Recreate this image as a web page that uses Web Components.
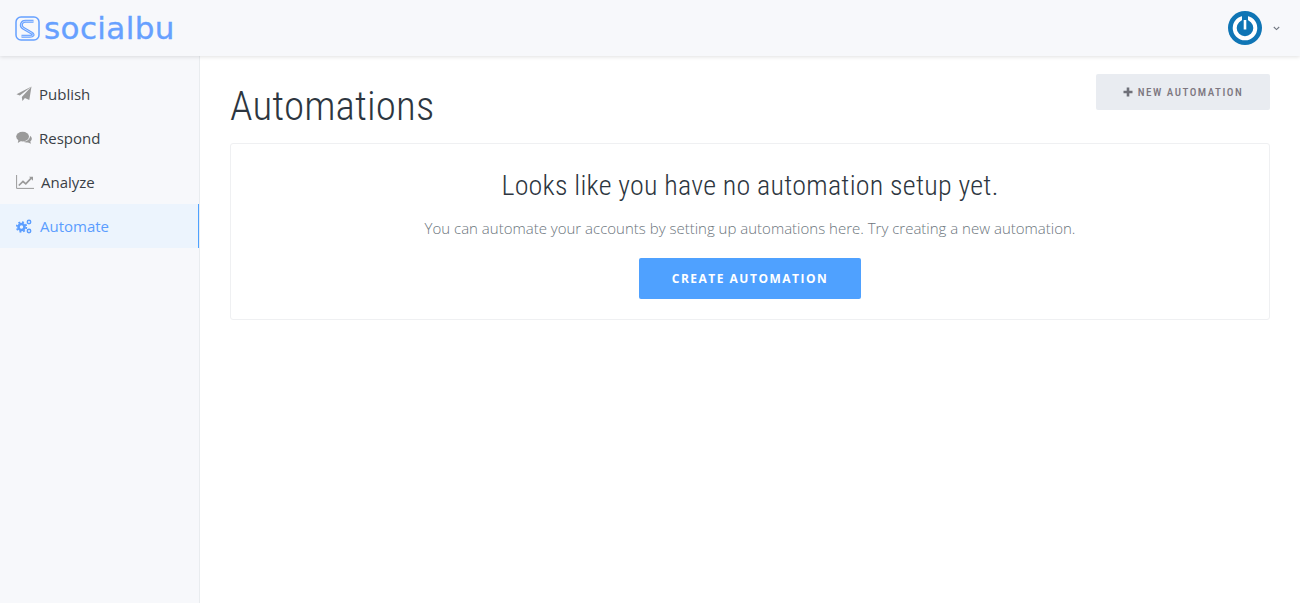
<!DOCTYPE html>
<html><head><meta charset="utf-8"><style>
html,body{margin:0;padding:0;height:100%;background:#fff}
body{font-family:"Open Sans",sans-serif}
</style></head><body>
<sb-app></sb-app>
<template id="t-app"><style>
:host{display:grid;grid-template-columns:200px 1fr;grid-template-rows:56px 547px;height:603px;overflow:hidden}
sb-top{grid-column:1/3;z-index:2}
</style><sb-top></sb-top><sb-side></sb-side><sb-main></sb-main></template>

<template id="t-top"><style>
:host{display:flex;align-items:center;justify-content:space-between;background:#f7f8fb;box-shadow:0 1px 4px rgba(0,0,0,.12);padding:0 20px 0 15px;height:56px;box-sizing:border-box}
.logo{display:flex;align-items:center;gap:4px;color:#66a0ff}
.word{font:400 31px/32px "DejaVu Sans",sans-serif;letter-spacing:.4px;-webkit-text-stroke:.35px #66a0ff;position:relative;top:-.5px}
.me{display:flex;align-items:center;gap:11px}
</style><div class="logo"><svg width="25" height="25" viewBox="0 0 25 25" fill="none"><rect x="1" y="1" width="23" height="23" rx="5" stroke="#66a0ff" stroke-width="1.500"/><path d="M18.500 5.300H10.500C6.500 5.300 4.800 9.600 8 12L16.500 17C19.300 18.800 18 20.300 15 20.300H6.500" stroke="#66a0ff" stroke-width="3"/><path d="M18.500 5.300H10.500C6.500 5.300 4.800 9.600 8 12L16.500 17C19.300 18.800 18 20.300 15 20.300H6.500" stroke="#dbe7ff" stroke-width=".8"/></svg><span class="word">socialbu</span></div>
<div class="me"><svg width="34" height="34" viewBox="0 0 34 34"><circle cx="17" cy="17" r="17" fill="#0f75b5"/><circle cx="17" cy="17" r="10.300" fill="none" stroke="#fff" stroke-width="4"/><path d="M17 4v14" stroke="#0f75b5" stroke-width="6"/><path d="M17 9v9.500" stroke="#fff" stroke-width="2.600"/></svg><svg width="7" height="5" viewBox="0 0 7 5"><path d="M.8 1l2.700 2.600L6.200 1" fill="none" stroke="#707680" stroke-width="1.100"/></svg></div></template>

<template id="t-side"><style>
:host{display:block;background:#f7f8fb;border-right:1px solid #e9ecef;padding-top:16px;box-sizing:border-box}
</style><slot></slot></template>

<template id="t-item"><style>
:host{display:flex;align-items:center;height:44px;padding-left:16px;box-sizing:border-box;font:400 15px/20px "Open Sans",sans-serif;color:#3a3f46}
:host([active]){background:#ecf4fd;color:#5b9dff;border-right:1px solid #4ea1ff}
.i{display:flex;margin-right:var(--g,7px)}
</style><span class="i"><slot name="icon"></slot></span><slot></slot></template>

<template id="t-main"><style>
:host{display:block;padding:18px 30px 0;position:relative}
.head{display:flex;justify-content:space-between;align-items:flex-start;height:69px}
h1{margin:7px 0 0;font:300 41px/50px "Roboto",sans-serif;font-stretch:75%;letter-spacing:.12px;color:#2d3640}
.new{display:flex;align-items:center;justify-content:center;gap:5px;width:174px;height:36px;background:#e9ecf1;border-radius:2px;font:500 11px/16px "Roboto",sans-serif;font-stretch:75%;letter-spacing:1.500px;color:#7d7780}
.new span{position:relative;top:1px}
.card{border:1px solid #eff0f2;border-radius:3px;height:177px;box-sizing:border-box;display:flex;flex-direction:column;align-items:center;padding-top:24px}
h2{margin:0;font:300 28px/36px "Roboto",sans-serif;font-stretch:75%;letter-spacing:.24px;color:#2d3640}
p{margin:13px 0 0;font:300 15px/22px "Open Sans",sans-serif;color:#6c757d}
.go{margin-top:19px;width:222px;height:41px;display:flex;align-items:center;justify-content:center;background:#4fa1ff;border-radius:2px;color:#fff;font:700 12px/16px "Open Sans",sans-serif;letter-spacing:1.500px}
</style><div class="head"><h1>Automations</h1><div class="new"><svg width="10" height="10" viewBox="0 0 10 10"><path d="M5 .5v9M.5 5h9" stroke="#6f7079" stroke-width="2.600"/></svg><span>NEW AUTOMATION</span></div></div>
<div class="card"><h2>Looks like you have no automation setup yet.</h2><p>You can automate your accounts by setting up automations here. Try creating a new automation.</p><div class="go">CREATE AUTOMATION</div></div></template>

<script>
function def(n,t){customElements.define(n,class extends HTMLElement{constructor(){super();this.attachShadow({mode:'open'}).appendChild(document.getElementById(t).content.cloneNode(true));}})}
def('sb-top','t-top');def('sb-item','t-item');def('sb-main','t-main');
customElements.define('sb-side',class extends HTMLElement{constructor(){super();this.attachShadow({mode:'open'}).appendChild(document.getElementById('t-side').content.cloneNode(true));
const c='#9a9a9a';
this.innerHTML=`
<sb-item><svg slot="icon" width="16" height="16" viewBox="0 0 16 16"><path d="M15.500.5 13.300 14l-4.400-1.900L6.400 15l-.6-4L15.500.5 3.800 9.600.5 8.200z" fill="${c}"/></svg>Publish</sb-item>
<sb-item><svg slot="icon" width="16" height="14" viewBox="0 0 16 14"><ellipse cx="6.600" cy="5.600" rx="6.400" ry="4.900" fill="${c}"/><path d="M2.500 8.500 1.800 12l4-2.500zM14 4.800c1.500 1 2.200 2.600 1.600 4-.3.8-.8 1.300-1.300 1.800l.7 2.200-3-1.400c-1.700.4-3.500 0-4.700-.8 3.500.1 6.800-2.400 6.700-5.800z" fill="${c}"/></svg>Respond</sb-item>
<sb-item><svg slot="icon" width="18" height="14" viewBox="0 0 18 14"><path d="M.6 0v13.400H18" fill="none" stroke="${c}" stroke-width="1"/><path d="M2.800 10.500 7 6.500l2.800 2.300 5.400-5.600" fill="none" stroke="${c}" stroke-width="1.700"/><path d="M13 1.800h4v4z" fill="${c}"/></svg>Analyze</sb-item>
<sb-item active style="--g:8px"><svg slot="icon" width="16" height="15" viewBox="0 0 16 15"><g fill="none" stroke="#5b9dff"><circle cx="5.500" cy="8" r="3" stroke-width="2.600"/><circle cx="5.500" cy="8" r="4.800" stroke-width="1.800" stroke-dasharray="1.900 1.870"/><circle cx="13" cy="3" r="1.700" stroke-width="1.500"/><circle cx="13" cy="12" r="1.700" stroke-width="1.500"/></g></svg>Automate</sb-item>`;}});
def('sb-app','t-app');
</script></body></html>
